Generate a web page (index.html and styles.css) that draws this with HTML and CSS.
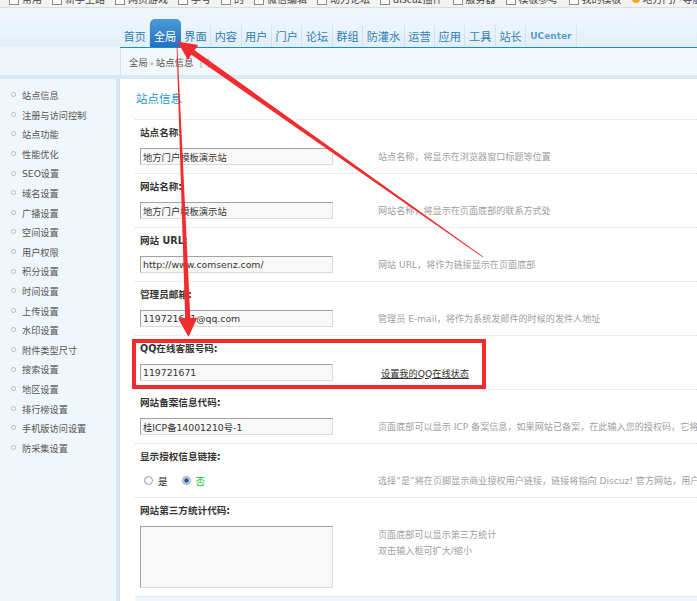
FILE: index.html
```html
<!DOCTYPE html>
<html lang="zh-CN">
<head>
<meta charset="utf-8">
<title>站点信息 - 全局</title>
<link rel="stylesheet" href="styles.css">
</head>
<body>
<div class="page">
  <div class="bookmarks">
    <span class="bm"><i class="bm-ico"></i>常用</span>
    <span class="bm"><i class="bm-ico"></i>新手上路</span>
    <span class="bm"><i class="bm-ico"></i>网页游戏</span>
    <span class="bm"><i class="bm-ico"></i>手号</span>
    <span class="bm"><i class="bm-ico"></i>的</span>
    <span class="bm"><i class="bm-ico"></i>微信编辑</span>
    <span class="bm"><i class="bm-ico"></i>动力论坛</span>
    <span class="bm"><i class="bm-ico"></i>discuz插件</span>
    <span class="bm"><i class="bm-ico"></i>服务器</span>
    <span class="bm"><i class="bm-ico"></i>模板参考</span>
    <span class="bm"><i class="bm-ico"></i>我的模板</span>
    <span class="bm"><i class="bm-ico orange"></i>地方门户导航</span>
  </div>

  <div class="head">
    <nav class="nav">
      <a class="nav-item">首页</a>
      <a class="nav-item active">全局</a>
      <a class="nav-item">界面</a>
      <a class="nav-item">内容</a>
      <a class="nav-item">用户</a>
      <a class="nav-item">门户</a>
      <a class="nav-item">论坛</a>
      <a class="nav-item">群组</a>
      <a class="nav-item">防灌水</a>
      <a class="nav-item">运营</a>
      <a class="nav-item">应用</a>
      <a class="nav-item">工具</a>
      <a class="nav-item">站长</a>
      <a class="nav-item uc">UCenter</a>
    </nav>
  </div>

  <div class="subhead">
    <div class="subhead-right">
      <div class="blueline"></div>
      <div class="crumb">全局 <span class="raquo">»</span> 站点信息 <span class="brk">[&nbsp;&nbsp;]</span></div>
    </div>
  </div>
  <div class="band"></div>

  <div class="body">
    <aside class="side">
      <ul class="menu">
        <li>站点信息</li>
        <li>注册与访问控制</li>
        <li>站点功能</li>
        <li>性能优化</li>
        <li>SEO设置</li>
        <li>域名设置</li>
        <li>广播设置</li>
        <li>空间设置</li>
        <li>用户权限</li>
        <li>积分设置</li>
        <li>时间设置</li>
        <li>上传设置</li>
        <li>水印设置</li>
        <li>附件类型尺寸</li>
        <li>搜索设置</li>
        <li>地区设置</li>
        <li>排行榜设置</li>
        <li>手机版访问设置</li>
        <li>防采集设置</li>
      </ul>
    </aside>

    <main class="main">
      <h3 class="title">站点信息</h3>

      <div class="row">
        <div class="label">站点名称:</div>
        <div class="field">
          <input class="input" type="text" value="地方门户模板演示站">
          <div class="desc">站点名称，将显示在浏览器窗口标题等位置</div>
        </div>
      </div>

      <div class="row">
        <div class="label">网站名称:</div>
        <div class="field">
          <input class="input" type="text" value="地方门户模板演示站">
          <div class="desc">网站名称，将显示在页面底部的联系方式处</div>
        </div>
      </div>

      <div class="row">
        <div class="label">网站 URL:</div>
        <div class="field">
          <input class="input" type="text" value="http://www.comsenz.com/">
          <div class="desc">网站 URL，将作为链接显示在页面底部</div>
        </div>
      </div>

      <div class="row">
        <div class="label">管理员邮箱:</div>
        <div class="field">
          <input class="input" type="text" value="119721671@qq.com">
          <div class="desc">管理员 E-mail，将作为系统发邮件的时候的发件人地址</div>
        </div>
      </div>

      <div class="row">
        <div class="label">QQ在线客服号码:</div>
        <div class="field">
          <input class="input" type="text" value="119721671">
          <a class="qqlink">设置我的QQ在线状态</a>
        </div>
      </div>

      <div class="row">
        <div class="label">网站备案信息代码:</div>
        <div class="field">
          <input class="input" type="text" value="桂ICP备14001210号-1">
          <div class="desc">页面底部可以显示 ICP 备案信息，如果网站已备案，在此输入您的授权码，它将显示在页面底部，如果没有请留空</div>
        </div>
      </div>

      <div class="row">
        <div class="label">显示授权信息链接:</div>
        <div class="field">
          <div class="radios">
            <span class="radio"></span><span class="rlabel">是</span>
            <span class="radio on"></span><span class="rlabel no">否</span>
          </div>
          <div class="desc">选择“是”将在页脚显示商业授权用户链接，链接将指向 Discuz! 官方网站，用户可以通过此链接验证其所使用的 Discuz! 是否经过商业授权</div>
        </div>
      </div>

      <div class="row last">
        <div class="label">网站第三方统计代码:</div>
        <div class="field tall">
          <textarea class="input area"></textarea>
          <div class="desc">页面底部可以显示第三方统计<br>双击输入框可扩大/缩小</div>
        </div>
      </div>
      <div class="foot-band"></div>
    </main>
  </div>
</div>

<svg class="annot" width="697" height="601" viewBox="0 0 697 601" aria-hidden="true">
  <rect x="134" y="341" width="350" height="46" fill="none" stroke="#f32b2d" stroke-width="4"/>
  <polygon fill="#f32b2d" points="483.23,256.67 194.61,50.16 198.2,45.1 177.5,41.5 187.8,59.8 191.39,54.74 482.77,257.33"/>
  <polygon fill="#f32b2d" points="177.4,45.98 190.35,317.9 197.24,317.63 188.5,337 178.26,318.38 185.15,318.1 176.6,46.02"/>
</svg>
</body>
</html>
```

FILE: styles.css
```css
html, body {
  margin: 0;
  padding: 0;
  height: 100%;
  overflow: hidden;
}

body {
  position: relative;
  font-family: "DejaVu Sans", "Noto Sans CJK SC", sans-serif;
  font-size: 9.6px;
  color: #333;
  background: #fff;
}

.page {
  width: 697px;
  height: 601px;
  overflow: hidden;
  display: flex;
  flex-direction: column;
}

/* browser bookmark strip (cut off at the top) */
.bookmarks {
  flex: none;
  height: 7px;
  background: #f3f3f3;
  border-bottom: 1px solid #dedede;
  overflow: hidden;
  display: flex;
  align-items: flex-end;
  gap: 10px;
  padding-left: 9px;
  white-space: nowrap;
}

.bm {
  display: flex;
  align-items: center;
  font-family: "Noto Sans CJK SC", sans-serif;
  font-size: 10px;
  line-height: 14px;
  color: #444;
  padding-bottom: 1px;
}

.bm-ico {
  display: inline-block;
  width: 8px;
  height: 10px;
  border: 1px solid #8a8a8a;
  background: #fbfbfb;
  margin-right: 3px;
}

.bm-ico.orange {
  border: none;
  width: 8px;
  height: 8px;
  border-radius: 50%;
  background: #f5a623;
}

/* admin header */
.head {
  flex: none;
  height: 39px;
  background: linear-gradient(#f1f6fc 0%, #edf4fb 40%, #e3eef8 100%);
  padding-left: 120px;
  display: flex;
  align-items: flex-end;
}

.nav {
  display: flex;
  align-items: flex-end;
}

.nav-item {
  font-family: "Noto Sans CJK SC", sans-serif;
  font-size: 11.2px;
  line-height: 22px;
  padding: 0 3.5px;
  border-right: 1px solid #d0e1ef;
  color: #2f80b4;
  white-space: nowrap;
}

.nav-item.active {
  padding-top: 6px;
  color: #fff;
  background: linear-gradient(#4b9ad8, #2470c0);
  border-radius: 5px 5px 0 0;
  border-right-color: transparent;
}

.nav-item.uc {
  font-family: "DejaVu Sans", sans-serif;
  font-weight: bold;
  font-size: 9px;
  color: #5a9cc8;
  padding: 0 4px 0 4px;
}

.subhead {
  flex: none;
  height: 28px;
  display: flex;
  background: #eef5fb;
}

.subhead-right {
  margin-left: 120px;
  flex: 1;
  display: flex;
  flex-direction: column;
}

.blueline {
  height: 4px;
  background: #138fcf;
}

.crumb {
  flex: 1;
  background: #f3f8fc;
  border-left: 1px solid #d3e4f1;
  padding: 2px 0 0 8px;
  line-height: 24px;
  color: #555;
  font-family: "Noto Sans CJK SC", sans-serif;
  font-size: 9.4px;
}

.raquo {
  color: #888;
  font-size: 8px;
}

.brk {
  color: #6aa0d0;
  margin-left: 4px;
}

.band {
  flex: none;
  height: 4px;
  background: #dbe9f5;
}

/* body */
.body {
  flex: 1;
  min-height: 0;
  display: flex;
}

.side {
  flex: none;
  width: 116px;
  background: #f0f7fc;
  border-right: 3px solid #d8e9f6;
}

.menu {
  list-style: none;
  margin: 0;
  padding: 7px 0 0;
  font-size: 9.2px;
}

.menu li {
  display: flex;
  align-items: center;
  line-height: 19.6px;
  color: #555;
  white-space: nowrap;
}

.menu li::before {
  content: "";
  width: 3px;
  height: 3px;
  border: 1px solid #a9bac6;
  border-radius: 50%;
  background: #fff;
  margin: 0 6px 2px 11px;
}

.main {
  flex: 1;
  min-width: 0;
  border-left: 1px solid #cde1f1;
  background: #fff;
  padding-left: 15px;
  overflow: hidden;
}

.title {
  margin: 0 0 12px 1px;
  padding-top: 10px;
  font-family: "Noto Sans CJK SC", sans-serif;
  font-weight: normal;
  font-size: 11.5px;
  line-height: 18px;
  color: #1b93d4;
}

.row {
  border-top: 1px dotted #cfe1ef;
  padding: 5px 0 8px 5px;
}

.label {
  font-weight: bold;
  line-height: 16px;
  color: #333;
  white-space: nowrap;
}

.field {
  display: flex;
  align-items: center;
  height: 17px;
  margin-top: 7px;
}

.field.tall {
  height: auto;
  align-items: flex-start;
}

.input {
  flex: none;
  box-sizing: border-box;
  width: 193px;
  height: 17px;
  margin: 0;
  padding: 0 2px;
  border: 1px solid;
  border-color: #a3a3a3 #dadada #dadada #a3a3a3;
  background: #f8f8f8;
  font: inherit;
  font-size: 9.3px;
  color: #333;
  outline: none;
}

.input.area {
  height: 62px;
  resize: none;
}

.desc {
  margin-left: 45px;
  color: #a0a0a0;
  white-space: nowrap;
  line-height: 16px;
  font-size: 9.1px;
}

.field.tall .desc {
  padding-top: 1px;
}

.qqlink {
  margin-left: 48px;
  color: #333;
  text-decoration: underline;
  white-space: nowrap;
  font-size: 9.2px;
}

.radios {
  flex: none;
  width: 193px;
  display: flex;
  align-items: center;
  padding-left: 4px;
  box-sizing: border-box;
}

.radio {
  box-sizing: border-box;
  width: 9px;
  height: 9px;
  border: 1px solid #9c9c9c;
  border-radius: 50%;
  background: radial-gradient(circle at 60% 60%, #fff 0 30%, #dcdcdc 100%);
}

.radio.on {
  margin-left: 14px;
  background: radial-gradient(circle, #1f50a4 0 1.8px, #a9c6e8 2.4px, #eef4fb 4px);
}

.rlabel {
  margin-left: 5px;
  color: #333;
}

.rlabel.no {
  color: #0bc40b;
}

.foot-band {
  height: 12px;
  border-top: 1px solid #e3eef7;
  background: #eff6fc;
}

/* annotation overlay */
.annot {
  position: absolute;
  left: 0;
  top: 0;
  pointer-events: none;
}
```
